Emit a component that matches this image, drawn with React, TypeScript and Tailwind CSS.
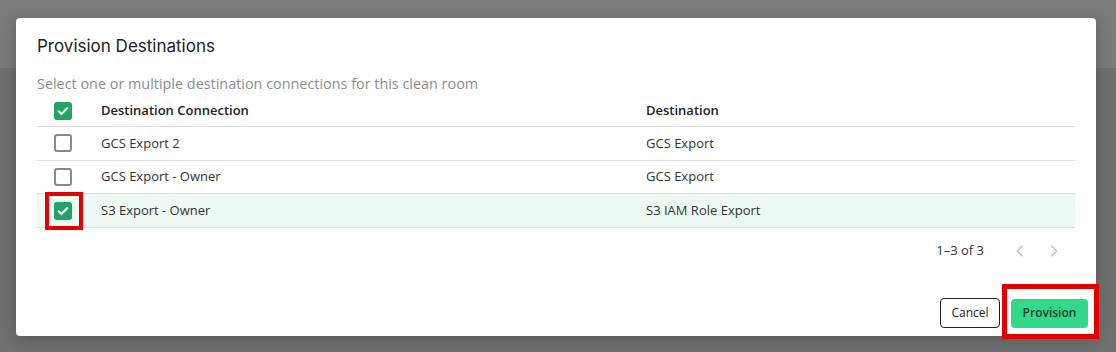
import { useState } from 'react';

interface Connection {
  id: string;
  name: string;
  destination: string;
}

const connections: Connection[] = [
  { id: 'gcs-2', name: 'GCS Export 2', destination: 'GCS Export' },
  { id: 'gcs-owner', name: 'GCS Export - Owner', destination: 'GCS Export' },
  { id: 's3-owner', name: 'S3 Export - Owner', destination: 'S3 IAM Role Export' },
];

const Checkbox = ({ checked }: { checked: boolean }) =>
  checked ? (
    <span className="flex h-[18px] w-[18px] items-center justify-center rounded-[3px] bg-[#21a366]">
      <svg width="14" height="14" viewBox="0 0 24 24" fill="none">
        <path d="M4.5 12.5l4.8 4.8L19.5 7" stroke="white" strokeWidth="3.6" strokeLinecap="round" strokeLinejoin="round" />
      </svg>
    </span>
  ) : (
    <span className="block h-[18px] w-[18px] rounded-[3px] border-2 border-[#8a8a8a] bg-white" />
  );

const Chevron = ({ dir }: { dir: 'left' | 'right' }) => (
  <svg width="16" height="16" viewBox="0 0 24 24" fill="none">
    <path
      d={dir === 'left' ? 'M15 5l-7 7 7 7' : 'M9 5l7 7-7 7'}
      stroke="#bdbdbd"
      strokeWidth="2.2"
      strokeLinecap="round"
      strokeLinejoin="round"
    />
  </svg>
);

const App = () => {
  const [selected] = useState<string[]>(['s3-owner']);

  return (
    <div className="relative h-[352px] w-[1116px] overflow-hidden bg-[#6f6f6f] font-['Open_Sans',sans-serif]">
      <div className="h-[68px] bg-[#7a7a7a]" />

      <div className="absolute left-[16px] top-[18px] flex h-[318px] w-[1080px] flex-col rounded-[4px] bg-white shadow-[0_4px_16px_rgba(0,0,0,0.2)]">
        <div className="px-[21px] pt-[17px]">
          <h2 className="font-['Inter',sans-serif] text-[17px] leading-[22px] text-[#222]">
            Provision Destinations
          </h2>
          <p className="mt-[17px] text-[14.4px] leading-[20px] text-[#8c8c8c]">
            Select one or multiple destination connections for this clean room
          </p>
        </div>

        <div className="mx-[21px] mt-px">
          <div className="grid h-[32px] grid-cols-[52px_545px_1fr] items-center border-b border-[#e0e0e0] text-[13px] font-semibold text-[#222]">
            <div className="flex justify-center">
              <Checkbox checked />
            </div>
            <div className="pl-3">Destination Connection</div>
            <div className="pl-3">Destination</div>
          </div>
          {connections.map((c) => {
            const isSel = selected.includes(c.id);
            return (
              <div
                key={c.id}
                className={`grid h-[33.67px] grid-cols-[52px_545px_1fr] items-center border-b border-[#e0e0e0] text-[13px] text-[#333] ${
                  isSel ? 'bg-[#edf9f3]' : 'bg-white'
                }`}
              >
                <div className="flex justify-center">
                  {isSel ? (
                    <span className="relative flex h-[18px] w-[18px] items-center justify-center">
                      <Checkbox checked />
                      <span className="absolute left-[-9px] top-[-10px] h-[38px] w-[38px] border-4 border-[#e00000]" />
                    </span>
                  ) : (
                    <Checkbox checked={false} />
                  )}
                </div>
                <div className="pl-3">{c.name}</div>
                <div className="pl-3">{c.destination}</div>
              </div>
            );
          })}

          <div className="flex h-[46px] items-center justify-end pr-[13px] text-[13px] text-[#333]">
            <span className="mr-[28px]">1–3 of 3</span>
            <div className="flex items-center gap-[18px]">
              <Chevron dir="left" />
              <Chevron dir="right" />
            </div>
          </div>
        </div>

        <div className="mt-auto flex items-center justify-end gap-[11px] p-2">
          <button
            type="button"
            className="h-[30px] w-[60px] rounded-[4px] border border-[#222] bg-white text-[12px] font-medium text-[#222]"
          >
            Cancel
          </button>
          <div className="relative">
            <button
              type="button"
              className="h-[29px] w-[77px] rounded-[4px] bg-[#33d98a] text-[12px] font-semibold text-[#1f3b2d]"
            >
              Provision
            </button>
            <span className="pointer-events-none absolute bottom-[-11px] left-[-9px] right-[-11px] top-[-15px] border-[5px] border-[#e00000]" />
          </div>
        </div>
      </div>
    </div>
  );
};

export default App;
